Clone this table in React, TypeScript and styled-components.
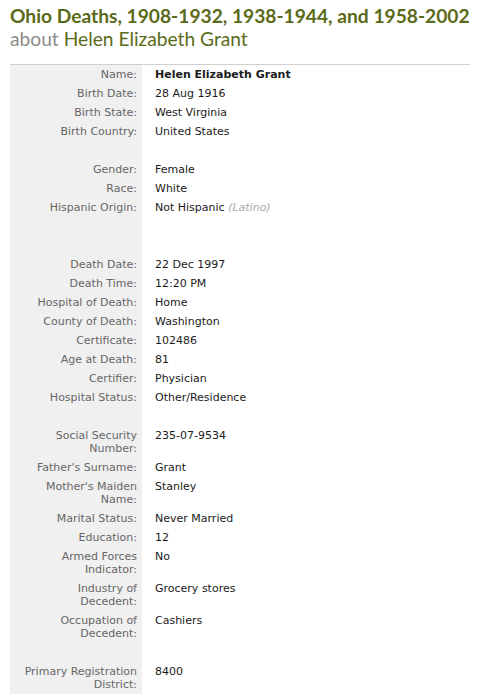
import React from 'react';
import styled, { createGlobalStyle } from 'styled-components';

const GlobalStyle = createGlobalStyle`
  body {
    margin: 0;
    background: #ffffff;
    font-family: "DejaVu Sans", Verdana, sans-serif;
  }
`;

const Page = styled.div`
  padding: 4px 7px 0 10px;
`;

const Title = styled.h1`
  margin: 0;
  font-family: Lato, "Open Sans", sans-serif;
  font-weight: 700;
  font-size: 19.2px;
  line-height: 23px;
  white-space: nowrap;
  color: #5b6a18;
`;

const Subtitle = styled.h2`
  margin: 0;
  font-family: Lato, "Open Sans", sans-serif;
  font-weight: 400;
  font-size: 19.2px;
  line-height: 23px;
  color: #8a8a8a;

  span {
    color: #5b6a18;
  }
`;

const Record = styled.div`
  margin-top: 14px;
  width: 460px;
  border-top: 1px solid #cfcfcf;
  display: grid;
  grid-template-columns: 132px 1fr;
  font-size: 11px;
  line-height: 13px;
`;

const Label = styled.div`
  background: #f0f0f0;
  color: #666666;
  text-align: right;
  padding: 3px 5px 3px 10px;
`;

const Value = styled.div<{ $strong?: boolean }>`
  color: #1a1a1a;
  padding: 3px 0 3px 13px;
  font-weight: ${(p) => (p.$strong ? 700 : 400)};
`;

const Note = styled.span`
  color: #aaaaaa;
  font-style: italic;
`;

type Row = { label: string; value: React.ReactNode; strong?: boolean } | null;

const rows: Row[] = [
  { label: 'Name:', value: 'Helen Elizabeth Grant', strong: true },
  { label: 'Birth Date:', value: '28 Aug 1916' },
  { label: 'Birth State:', value: 'West Virginia' },
  { label: 'Birth Country:', value: 'United States' },
  null,
  { label: 'Gender:', value: 'Female' },
  { label: 'Race:', value: 'White' },
  {
    label: 'Hispanic Origin:',
    value: (
      <>
        Not Hispanic <Note>(Latino)</Note>
      </>
    ),
  },
  null,
  null,
  { label: 'Death Date:', value: '22 Dec 1997' },
  { label: 'Death Time:', value: '12:20 PM' },
  { label: 'Hospital of Death:', value: 'Home' },
  { label: 'County of Death:', value: 'Washington' },
  { label: 'Certificate:', value: '102486' },
  { label: 'Age at Death:', value: '81' },
  { label: 'Certifier:', value: 'Physician' },
  { label: 'Hospital Status:', value: 'Other/Residence' },
  null,
  { label: 'Social Security Number:', value: '235-07-9534' },
  { label: "Father's Surname:", value: 'Grant' },
  { label: "Mother's Maiden Name:", value: 'Stanley' },
  { label: 'Marital Status:', value: 'Never Married' },
  { label: 'Education:', value: '12' },
  { label: 'Armed Forces Indicator:', value: 'No' },
  { label: 'Industry of Decedent:', value: 'Grocery stores' },
  { label: 'Occupation of Decedent:', value: 'Cashiers' },
  null,
  { label: 'Primary Registration District:', value: '8400' },
];

const App: React.FC = () => {
  return (
    <Page>
      <GlobalStyle />
      <Title>Ohio Deaths, 1908-1932, 1938-1944, and 1958-2002</Title>
      <Subtitle>
        about <span>Helen Elizabeth Grant</span>
      </Subtitle>
      <Record>
        {rows.map((row, i) =>
          row ? (
            <React.Fragment key={i}>
              <Label>{row.label}</Label>
              <Value $strong={row.strong}>{row.value}</Value>
            </React.Fragment>
          ) : (
            <React.Fragment key={i}>
              <Label>&nbsp;</Label>
              <Value>&nbsp;</Value>
            </React.Fragment>
          )
        )}
      </Record>
    </Page>
  );
};

export default App;
